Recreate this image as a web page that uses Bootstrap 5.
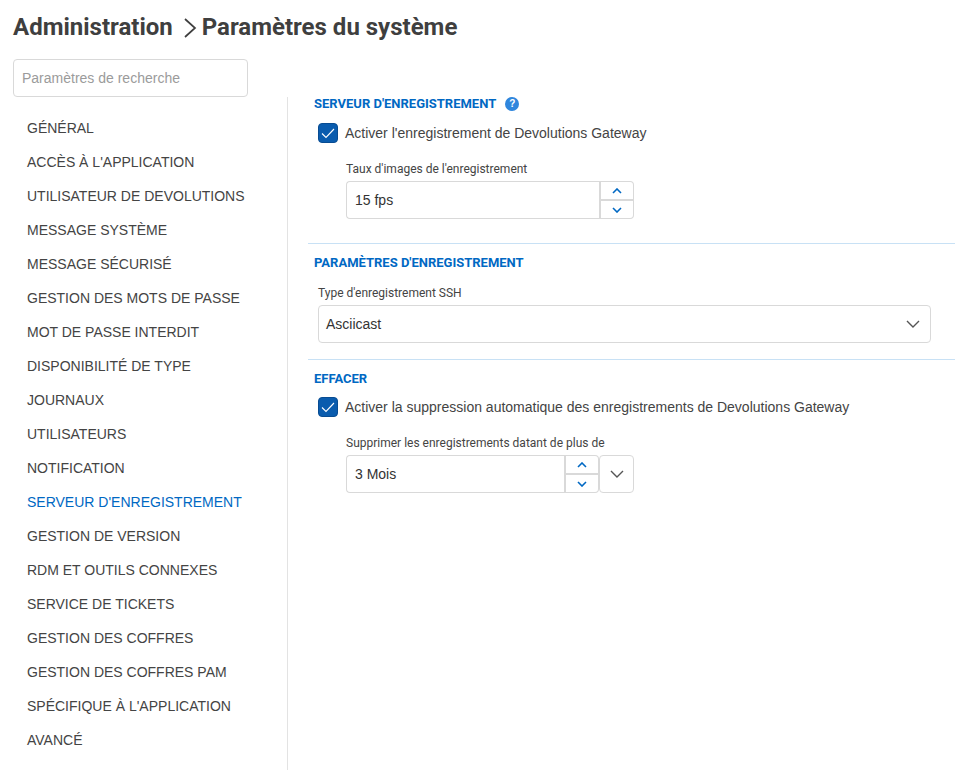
<!DOCTYPE html>
<html lang="fr">
<head>
<meta charset="utf-8">
<title>Paramètres du système</title>
<link href="https://cdn.jsdelivr.net/npm/bootstrap@5.3.0/dist/css/bootstrap.min.css" rel="stylesheet">
<style>
html,body{height:100%;overflow:hidden}
body{font-family:"Liberation Sans",Arial,sans-serif;color:#3d3d3d;background:#fff}
.page-head{font-family:Roboto,sans-serif;height:59px;padding:11px 0 0 13px;font-size:24px;font-weight:700;line-height:32px;color:#3f3f3f;gap:10px}
.crumb-gt{width:14px;height:20px;margin-top:7px;margin-right:-5px}
.layout{height:714px}
.side{width:288px;flex:none}
.search-box{width:235px;height:38px;margin-left:13px;border:1px solid #d9d9d9;border-radius:4px;padding:0 8px;font-size:14px;font-family:inherit;color:#333;box-shadow:none}
.search-box::placeholder{color:#9b9b9b;opacity:1}
.side-list-wrap{border-right:1px solid #e3e3e3;height:673px;padding-top:14px}
.side-item{height:34px;line-height:34px;padding-left:27px;font-size:14px;color:#444;white-space:nowrap}
.side-item.on{color:#0068c3}
.main{flex:1;padding-top:38px;padding-left:20px;min-width:0}
.sect{padding:0 0 0 6px}
.sect-1{height:146px}
.sect-2{height:116px;padding-top:12px}
.sect-3{padding-top:12px}
.sect-3 .chk-row{margin-top:11px}
.sect-rule{border-top:1px solid #c8e1f5}
.sect-title{font-family:Roboto,sans-serif;font-size:13px;font-weight:700;line-height:14px;color:#0068c3;text-transform:uppercase;margin:0}
.help-dot{width:14px;height:14px;border-radius:50%;background:#2f86dd;color:#fff;font-size:10px;font-weight:700;line-height:14px;text-align:center;margin-left:9px}
.chk-row{margin:12px 0 0 4px;gap:7px;height:20px;font-size:14px;line-height:20px;color:#444}
.chk{width:20px;height:20px;border-radius:4px;background:#0a5cae;border:1px solid #084c92;flex:none}
.chk svg{display:block}
.fld-label{font-family:Roboto,sans-serif;font-size:12px;line-height:14px;color:#444;margin:0}
.sub{margin:19px 0 0 32px;width:288px}
.cbox{height:38px;border:1px solid #d9d9d9;border-radius:4px;background:#fff;font-size:14px;color:#333;padding-left:8px}
.stack{margin-top:5px;gap:0}
.stack .cbox{flex:1;min-width:0}
.spin{width:35px;height:38px;border:1px solid #d9d9d9;border-left-width:2px;border-radius:0 4px 4px 0;flex:none}
.spin-part{flex:1;min-height:0}
.spin-part+.spin-part{border-top:2px solid #d9d9d9}
.stack .join{border-radius:4px 0 0 4px;border-right:0}
.dd{width:35px;height:38px;border:1px solid #d9d9d9;border-radius:4px;flex:none}
.sel-wrap{margin:16px 24px 0 4px}
.sel-wrap .fld-label{margin-bottom:5px}
.sel-wrap .cbox{padding-left:7px}
.sel-chev{margin-right:10px}
</style>
</head>
<body>
<div class="page-head d-flex align-items-start">
  <span>Administration</span>
  <svg class="crumb-gt" viewBox="0 0 14 20" fill="none" stroke="#3f3f3f" stroke-width="1.7"><path d="M2 1l10 9-10 9"/></svg>
  <span>Paramètres du système</span>
</div>
<div class="layout d-flex">
  <div class="side">
    <input class="form-control search-box" type="text" placeholder="Paramètres de recherche">
    <div class="side-list-wrap">
      <div class="side-item">GÉNÉRAL</div>
      <div class="side-item">ACCÈS À L'APPLICATION</div>
      <div class="side-item">UTILISATEUR DE DEVOLUTIONS</div>
      <div class="side-item">MESSAGE SYSTÈME</div>
      <div class="side-item">MESSAGE SÉCURISÉ</div>
      <div class="side-item">GESTION DES MOTS DE PASSE</div>
      <div class="side-item">MOT DE PASSE INTERDIT</div>
      <div class="side-item">DISPONIBILITÉ DE TYPE</div>
      <div class="side-item">JOURNAUX</div>
      <div class="side-item">UTILISATEURS</div>
      <div class="side-item">NOTIFICATION</div>
      <div class="side-item on">SERVEUR D'ENREGISTREMENT</div>
      <div class="side-item">GESTION DE VERSION</div>
      <div class="side-item">RDM ET OUTILS CONNEXES</div>
      <div class="side-item">SERVICE DE TICKETS</div>
      <div class="side-item">GESTION DES COFFRES</div>
      <div class="side-item">GESTION DES COFFRES PAM</div>
      <div class="side-item">SPÉCIFIQUE À L'APPLICATION</div>
      <div class="side-item">AVANCÉ</div>
    </div>
  </div>
  <div class="main">
    <section class="sect sect-1">
      <div class="d-flex align-items-center"><h2 class="sect-title">Serveur d'enregistrement</h2><span class="help-dot">?</span></div>
      <div class="chk-row d-flex align-items-center">
        <span class="chk"><svg viewBox="0 0 18 18" width="18" height="18" fill="none" stroke="#fff" stroke-width="1.1"><path d="M3 9.5l4 4 8-8.5"/></svg></span>
        <span>Activer l'enregistrement de Devolutions Gateway</span>
      </div>
      <div class="sub">
        <p class="fld-label">Taux d'images de l'enregistrement</p>
        <div class="stack d-flex">
          <div class="cbox join d-flex align-items-center">15 fps</div>
          <div class="spin d-flex flex-column">
            <div class="spin-part d-flex align-items-center justify-content-center"><svg width="10" height="6" viewBox="0 0 10 6" fill="none" stroke="#0068c3" stroke-width="1.6"><path d="M1 5l4-4 4 4"/></svg></div>
            <div class="spin-part d-flex align-items-center justify-content-center"><svg width="10" height="6" viewBox="0 0 10 6" fill="none" stroke="#0068c3" stroke-width="1.6"><path d="M1 1l4 4 4-4"/></svg></div>
          </div>
        </div>
      </div>
    </section>
    <section class="sect sect-2 sect-rule">
      <h2 class="sect-title">Paramètres d'enregistrement</h2>
      <div class="sel-wrap">
        <p class="fld-label">Type d'enregistrement SSH</p>
        <div class="cbox d-flex align-items-center justify-content-between">
          <span>Asciicast</span>
          <svg class="sel-chev" width="14" height="8" viewBox="0 0 14 8" fill="none" stroke="#555" stroke-width="1.4"><path d="M1 1l6 6 6-6"/></svg>
        </div>
      </div>
    </section>
    <section class="sect sect-3 sect-rule">
      <h2 class="sect-title">Effacer</h2>
      <div class="chk-row d-flex align-items-center">
        <span class="chk"><svg viewBox="0 0 18 18" width="18" height="18" fill="none" stroke="#fff" stroke-width="1.1"><path d="M3 9.5l4 4 8-8.5"/></svg></span>
        <span>Activer la suppression automatique des enregistrements de Devolutions Gateway</span>
      </div>
      <div class="sub">
        <p class="fld-label">Supprimer les enregistrements datant de plus de</p>
        <div class="stack d-flex">
          <div class="cbox join d-flex align-items-center">3 Mois</div>
          <div class="spin d-flex flex-column">
            <div class="spin-part d-flex align-items-center justify-content-center"><svg width="10" height="6" viewBox="0 0 10 6" fill="none" stroke="#0068c3" stroke-width="1.6"><path d="M1 5l4-4 4 4"/></svg></div>
            <div class="spin-part d-flex align-items-center justify-content-center"><svg width="10" height="6" viewBox="0 0 10 6" fill="none" stroke="#0068c3" stroke-width="1.6"><path d="M1 1l4 4 4-4"/></svg></div>
          </div>
          <div class="dd d-flex align-items-center justify-content-center"><svg width="14" height="8" viewBox="0 0 14 8" fill="none" stroke="#555" stroke-width="1.4"><path d="M1 1l6 6 6-6"/></svg></div>
        </div>
      </div>
    </section>
  </div>
</div>
<script src="https://cdn.jsdelivr.net/npm/bootstrap@5.3.0/dist/js/bootstrap.bundle.min.js"></script>
</body>
</html>
